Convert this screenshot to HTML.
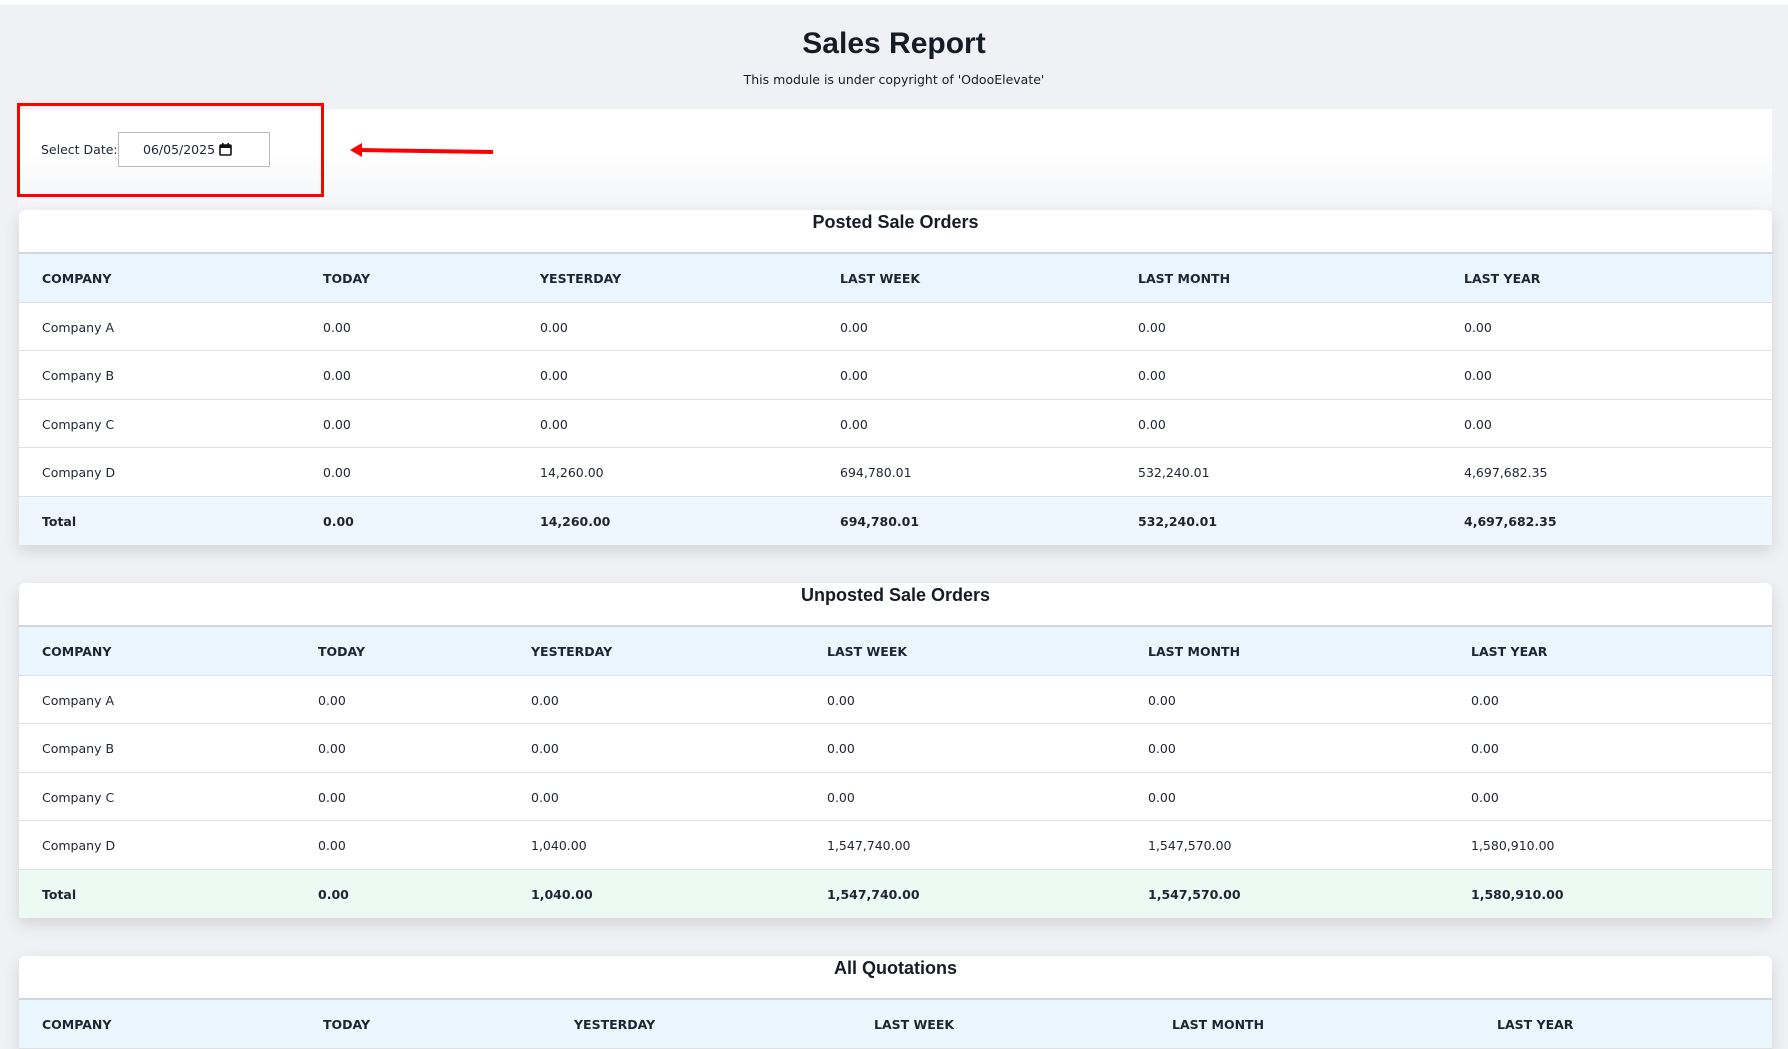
<!DOCTYPE html>
<html><head><meta charset="utf-8"><style>
*{margin:0;padding:0;box-sizing:border-box}
body{width:1788px;height:1023px;overflow:hidden;background:#f0f1f4;font-family:"DejaVu Sans","Liberation Sans",sans-serif;color:#1f2430;position:relative}
.top{position:absolute;left:0;top:0;width:1788px;height:5px;background:#fff}
h1{position:absolute;left:0;width:1788px;top:27px;text-align:center;font:bold 30px "Liberation Sans",sans-serif;color:#161b26}
.sub{position:absolute;left:0;width:1788px;top:72px;text-align:center;font-size:12.5px;color:#161b26}
.datep{position:absolute;left:18px;top:109px;width:1754px;height:101px;background:linear-gradient(#fff 40%,#f3f4f6)}
.red{position:absolute;left:17px;top:103px;width:307px;height:94px;border:3px solid #f00}
.lbl{position:absolute;left:41px;top:142px;font-size:12.5px}
.inp{position:absolute;left:118px;top:132px;width:152px;height:35px;border:1px solid #bbb;background:#fff;font-size:12.5px;padding:9px 0 0 24px}
.card{position:absolute;left:19px;width:1753px;background:#fff;border-radius:6px 6px 0 0;box-shadow:0 6px 16px rgba(0,0,0,.12)}
.card h2{height:44px;text-align:center;font:bold 18px "Liberation Sans",sans-serif;padding-top:2px;color:#161b26;border-bottom:2px solid #d2d6dc}
.row{position:relative;height:48.5px;border-bottom:1px solid #dde1e6;font-size:12.5px}
.row span{position:absolute;top:17px}
.hd{background:#e9f6fd;font-weight:bold;font-size:12.5px;color:#1c2533}
.tot{font-weight:bold;border-bottom:none}
</style></head><body>
<div class="top"></div>
<h1>Sales Report</h1>
<div class="sub">This module is under copyright of 'OdooElevate'</div>
<div class="datep"></div>
<div class="red"></div>
<div class="lbl">Select Date:</div>
<div class="inp">06/05/2025 <svg width="13" height="13" viewBox="0 0 13 13" style="vertical-align:-2px"><rect x="1" y="2" width="11" height="10" rx="1" fill="none" stroke="#111" stroke-width="1.6"/><rect x="1" y="2" width="11" height="3" fill="#111"/><rect x="3" y="0" width="1.6" height="3" fill="#111"/><rect x="8.4" y="0" width="1.6" height="3" fill="#111"/></svg></div>
<svg style="position:absolute;left:348px;top:140px" width="150" height="20"><line x1="12" y1="10" x2="145" y2="12" stroke="#f00" stroke-width="4"/><polygon points="2,10 14,3 14,17" fill="#f00"/></svg>

<div class="card" style="top:210px">
<h2>Posted Sale Orders</h2>
<div class="row hd"><span style="left:23px">COMPANY</span><span style="left:304px">TODAY</span><span style="left:521px">YESTERDAY</span><span style="left:821px">LAST WEEK</span><span style="left:1119px">LAST MONTH</span><span style="left:1445px">LAST YEAR</span></div>
<div class="row"><span style="left:23px">Company A</span><span style="left:304px">0.00</span><span style="left:521px">0.00</span><span style="left:821px">0.00</span><span style="left:1119px">0.00</span><span style="left:1445px">0.00</span></div>
<div class="row"><span style="left:23px">Company B</span><span style="left:304px">0.00</span><span style="left:521px">0.00</span><span style="left:821px">0.00</span><span style="left:1119px">0.00</span><span style="left:1445px">0.00</span></div>
<div class="row"><span style="left:23px">Company C</span><span style="left:304px">0.00</span><span style="left:521px">0.00</span><span style="left:821px">0.00</span><span style="left:1119px">0.00</span><span style="left:1445px">0.00</span></div>
<div class="row"><span style="left:23px">Company D</span><span style="left:304px">0.00</span><span style="left:521px">14,260.00</span><span style="left:821px">694,780.01</span><span style="left:1119px">532,240.01</span><span style="left:1445px">4,697,682.35</span></div>
<div class="row tot" style="background:#eef6fe"><span style="left:23px">Total</span><span style="left:304px">0.00</span><span style="left:521px">14,260.00</span><span style="left:821px">694,780.01</span><span style="left:1119px">532,240.01</span><span style="left:1445px">4,697,682.35</span></div>
</div>

<div class="card" style="top:583px">
<h2>Unposted Sale Orders</h2>
<div class="row hd"><span style="left:23px">COMPANY</span><span style="left:299px">TODAY</span><span style="left:512px">YESTERDAY</span><span style="left:808px">LAST WEEK</span><span style="left:1129px">LAST MONTH</span><span style="left:1452px">LAST YEAR</span></div>
<div class="row"><span style="left:23px">Company A</span><span style="left:299px">0.00</span><span style="left:512px">0.00</span><span style="left:808px">0.00</span><span style="left:1129px">0.00</span><span style="left:1452px">0.00</span></div>
<div class="row"><span style="left:23px">Company B</span><span style="left:299px">0.00</span><span style="left:512px">0.00</span><span style="left:808px">0.00</span><span style="left:1129px">0.00</span><span style="left:1452px">0.00</span></div>
<div class="row"><span style="left:23px">Company C</span><span style="left:299px">0.00</span><span style="left:512px">0.00</span><span style="left:808px">0.00</span><span style="left:1129px">0.00</span><span style="left:1452px">0.00</span></div>
<div class="row"><span style="left:23px">Company D</span><span style="left:299px">0.00</span><span style="left:512px">1,040.00</span><span style="left:808px">1,547,740.00</span><span style="left:1129px">1,547,570.00</span><span style="left:1452px">1,580,910.00</span></div>
<div class="row tot" style="background:#ebfbf3"><span style="left:23px">Total</span><span style="left:299px">0.00</span><span style="left:512px">1,040.00</span><span style="left:808px">1,547,740.00</span><span style="left:1129px">1,547,570.00</span><span style="left:1452px">1,580,910.00</span></div>
</div>

<div class="card" style="top:956px">
<h2>All Quotations</h2>
<div class="row hd"><span style="left:23px">COMPANY</span><span style="left:304px">TODAY</span><span style="left:555px">YESTERDAY</span><span style="left:855px">LAST WEEK</span><span style="left:1153px">LAST MONTH</span><span style="left:1478px">LAST YEAR</span></div>
</div>
</body></html>
